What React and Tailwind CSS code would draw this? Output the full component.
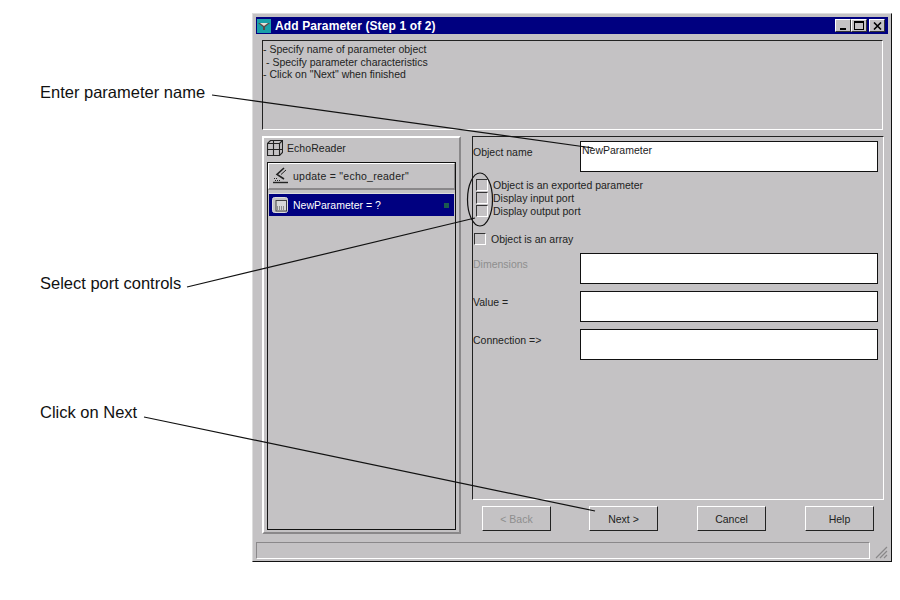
const raised = "border border-t-white border-l-white border-r-[#222] border-b-[#222]";

const CheckRow = ({ label, className = "" }) => (
	<div className={`flex items-center h-[13px] ${className}`}>
		<span className="w-[12px] h-[12px] bg-[#c4c2c4] border border-t-[#333] border-l-[#333] border-r-white border-b-white shrink-0" />
		<span className="ml-[5px] whitespace-nowrap">{label}</span>
	</div>
);

const Field = ({ label, value, className = "", labelClass = "text-[#222]" }) => (
	<div className={`flex items-start ${className}`}>
		<span className={`w-[107px] shrink-0 pt-[5px] ${labelClass}`}>{label}</span>
		<div className="w-[298px] h-[31px] bg-white border border-[#111] pl-[1px] pt-[2px]">{value}</div>
	</div>
);

const Btn = ({ label, disabled, className = "" }) => (
	<button
		className={`w-[69px] h-[25px] flex items-center justify-center ${raised} ${disabled ? "text-[#8e8e8e]" : "text-[#222]"} ${className}`}
	>
		{label}
	</button>
);

const WinBtn = ({ children, className = "" }) => (
	<div className={`w-[16px] h-[13px] bg-[#c4c2c4] flex items-center justify-center border border-t-white border-l-white border-r-[#333] border-b-[#333] ${className}`}>
		{children}
	</div>
);

const App = () => {
	return (
		<div className="relative w-[900px] h-[600px] bg-white overflow-hidden text-[10.5px] leading-[12px] text-[#222] font-['Liberation_Sans',Arial,sans-serif]">
			<div className="absolute left-[40px] top-[83px] text-[16.5px] leading-[18px] text-[#111]">Enter parameter name</div>
			<div className="absolute left-[40px] top-[274px] text-[16.5px] leading-[18px] text-[#111]">Select port controls</div>
			<div className="absolute left-[40px] top-[403px] text-[16.5px] leading-[18px] text-[#111]">Click on Next</div>

			<div className="absolute left-[252px] top-[13px] w-[640px] h-[549px] bg-[#c4c2c4] flex flex-col pt-[3px] px-[3px] pb-[2px] border border-t-[#ddd] border-l-[#ddd] border-r-[#111] border-b-[#111]">
				{/* title bar */}
				<div className="h-[17px] bg-[#000080] flex items-center pl-[1px] pr-[3px] text-white font-bold text-[12px] tracking-[0.12px] shrink-0">
					<svg width="14" height="14" viewBox="0 0 14 14" className="shrink-0">
						<rect width="14" height="14" fill="#1aa0a8" />
						<path d="M1 4h12L8 8v3H6V8z" fill="#5a4a4a" />
						<path d="M3 4h8L7 7z" fill="#e8e0d8" />
					</svg>
					<span className="ml-[4px]">Add Parameter (Step 1 of 2)</span>
					<div className="ml-auto flex items-center">
						<WinBtn className="items-end pb-[1px]">
							<span className="w-[6px] h-[2px] bg-black" />
						</WinBtn>
						<WinBtn>
							<span className="w-[10px] h-[9px] border border-black border-t-2" />
						</WinBtn>
						<WinBtn className="ml-[2px] w-[14px]">
							<svg width="9" height="8" viewBox="0 0 9 8">
								<path d="M1 0.5 8 7.5M8 0.5 1 7.5" stroke="#000" strokeWidth="1.6" />
							</svg>
						</WinBtn>
					</div>
				</div>

				{/* instructions */}
				<div className="mt-[6px] ml-[6px] mr-[5px] h-[90px] shrink-0 border border-t-[#222] border-l-[#222] border-r-white border-b-white text-[10.5px] leading-[12.5px] pt-[2px]">
					<div>- Specify name of parameter object</div>
					<div className="pl-[3px]">- Specify parameter characteristics</div>
					<div>- Click on "Next" when finished</div>
				</div>

				<div className="mt-[6px] ml-[6px] flex items-start">
					{/* object tree */}
					<div className="w-[199px] h-[398px] shrink-0 border-2 border-t-white border-l-white border-r-[#8a888a] border-b-[#8a888a] px-[3px] pb-[2px] flex flex-col">
						<div className="h-[24px] flex items-center pb-[4px] shrink-0">
							<svg width="16" height="16" viewBox="0 0 16 16" fill="none" stroke="#222" strokeWidth="1.1" className="shrink-0">
								<path d="M0.5 3.5 3.5 0.5H15.5V12.5L12.5 15.5H0.5Z" />
								<path d="M0.5 3.5H12.5V15.5M12.5 3.5 15.5 0.5M0.5 9.5H15.5M6.5 0.5V15.5" />
							</svg>
							<span className="ml-[4px] tracking-[0.05px]">EchoReader</span>
						</div>
						<div className="flex-1 border border-[#111] flex flex-col">
							<div className="h-[27px] flex items-center pl-[3px] border border-t-white border-l-white border-r-[#8a888a] border-b-2 border-b-[#8a888a]">
								<svg width="18" height="18" viewBox="0 0 18 18" fill="none" stroke="#222" className="shrink-0">
									<path d="M12 1 5 7.5 12 12" strokeWidth="1.6" />
									<path d="M14 3 9 7.5" strokeWidth="1" />
									<path d="M1 15.5H16" strokeWidth="1.4" />
									<path d="M3 13.5H8M2 11.5H5" strokeDasharray="1 1" />
								</svg>
								<span className="ml-[3px] tracking-[0.25px]">update = "echo_reader"</span>
							</div>
							<div className="mt-[3px] h-[24px] bg-[#000080] text-white flex items-center pl-[3px] pr-[5px] border border-t-[#ddd] border-l-[#c4c2c4] border-b-[#c4c2c4] border-r-[#c4c2c4]">
								<svg width="16" height="16" viewBox="0 0 16 16" className="shrink-0">
									<rect x="0.5" y="0.5" width="15" height="15" rx="2" fill="#c4c2c4" stroke="#ddd" />
									<rect x="4" y="3.5" width="10.5" height="10.5" fill="#d8d8d8" stroke="#444" />
									<path d="M5 10h8M5 12h8" stroke="#444" strokeDasharray="1 1" />
								</svg>
								<span className="ml-[5px]">NewParameter = ?</span>
								<span className="ml-auto w-[5px] h-[5px] bg-[#1c5a50]" />
							</div>
						</div>
					</div>

					{/* properties */}
					<div className="ml-[11px] mr-[4px] flex-1 flex flex-col">
						<div className="h-[364px] border border-t-[#222] border-l-[#222] border-r-white border-b-white pt-[4px] flex flex-col">
							<Field label="Object name" value="NewParameter" />
							<div className="mt-[6px] pl-[3px]">
								<CheckRow label="Object is an exported parameter" />
								<CheckRow label="Display input port" />
								<CheckRow label="Display output port" />
							</div>
							<CheckRow label="Object is an array" className="mt-[15px] ml-[1px]" />
							<Field label="Dimensions" labelClass="text-[#8e8e8e]" className="mt-[8px]" />
							<Field label="Value =" className="mt-[7px]" />
							<Field label="Connection =>" className="mt-[7px]" />
						</div>
						<div className="mt-[6px] pl-[10px] flex gap-[38px]">
							<Btn label="< Back" disabled />
							<Btn label="Next >" />
							<Btn label="Cancel" className="ml-[1px]" />
							<Btn label="Help" className="ml-[1px]" />
						</div>
					</div>
				</div>

				{/* status bar */}
				<div className="mt-auto flex items-end">
					<div className="w-[616px] h-[17px] border border-t-[#8a888a] border-l-[#8a888a] border-r-white border-b-white" />
					<svg width="14" height="14" viewBox="0 0 14 14" className="ml-[4px]" stroke="#8a888a" strokeWidth="1.2">
						<path d="M13 2 2 13M13 6 6 13M13 10 10 13" />
					</svg>
				</div>
			</div>

			{/* callout lines */}
			<svg width="900" height="600" viewBox="0 0 900 600" fill="none" stroke="#111" strokeWidth="1.2" className="absolute left-0 top-0 pointer-events-none">
				<path d="M212 95 593 148" />
				<path d="M187 287 475 218" />
				<path d="M144 417 595 511" />
				<ellipse cx="480" cy="199.5" rx="12.5" ry="26.5" />
			</svg>
		</div>
	);
};

export default App;
